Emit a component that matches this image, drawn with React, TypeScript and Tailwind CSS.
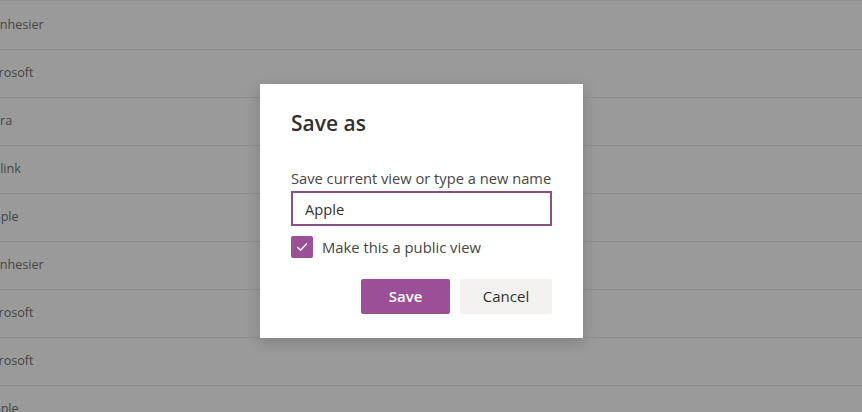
import { useState } from "react";

const rows = [
  { name: "Sennhesier", shift: "-ml-[22px]" },
  { name: "Microsoft", shift: "-ml-[22px]" },
  { name: "Zebra", shift: "-ml-[22px]" },
  { name: "Dlink", shift: "-ml-[9px]" },
  { name: "Apple", shift: "-ml-[15px]" },
  { name: "Sennhesier", shift: "-ml-[22px]" },
  { name: "Microsoft", shift: "-ml-[22px]" },
  { name: "Microsoft", shift: "-ml-[22px]" },
  { name: "Apple", shift: "-ml-[15px]" },
];

function CheckIcon() {
  return (
    <svg width="14" height="14" viewBox="0 0 14 14" fill="none">
      <path d="M2.5 7.2 L5.6 10.2 L11.6 3.8" stroke="white" strokeWidth="1.3" strokeLinecap="round" strokeLinejoin="round" />
    </svg>
  );
}

export default function App() {
  const [name, setName] = useState("Apple");
  const [isPublic, setIsPublic] = useState(true);

  return (
    <div
      className="relative h-[412px] w-[862px] overflow-hidden bg-[#9a9a9a]"
      style={{ fontFamily: '"Open Sans", "Noto Sans", sans-serif' }}
    >
      <ul className="flex flex-col border-t border-[#8e8e8e] pt-[1px]">
        {rows.map((r, i) => (
          <li key={i} className="flex h-[48px] shrink-0 items-center border-b border-[#8e8e8e]">
            <span className={`${r.shift} text-[12.6px] text-[#454545]`}>{r.name}</span>
          </li>
        ))}
      </ul>

      <div className="absolute left-[260px] top-[84px] flex h-[254px] w-[323px] flex-col bg-white px-[31px] pt-[24px] shadow-[0_4px_14px_rgba(0,0,0,0.18)]">
        <h2 className="text-[21px] font-semibold leading-[30px] text-[#323130]">Save as</h2>
        <label className="mt-[30px] text-[14.7px] leading-[20px] text-[#484644]">
          Save current view or type a new name
        </label>
        <input
          value={name}
          onChange={(e) => setName(e.target.value)}
          className="mt-[3px] h-[35px] w-[261px] border-2 border-[#8a4f84] px-[12px] text-[14.7px] text-[#323130] outline-none"
        />
        <label className="mt-[10px] flex items-center gap-[9px] text-[14.8px] text-[#484644]">
          <button
            type="button"
            onClick={() => setIsPublic((p) => !p)}
            className={`flex h-[22px] w-[22px] items-center justify-center rounded-[2px] ${
              isPublic ? "bg-[#9b4f96]" : "border border-[#605e5c] bg-white"
            }`}
          >
            {isPublic && <CheckIcon />}
          </button>
          Make this a public view
        </label>
        <div className="mt-[21px] flex justify-end gap-[10px]">
          <button
            type="button"
            className="h-[35px] w-[89px] rounded-[2px] bg-[#9b4f96] text-[15px] font-semibold text-white"
          >
            Save
          </button>
          <button
            type="button"
            className="h-[35px] w-[92px] rounded-[2px] bg-[#f3f2f1] text-[15px] text-[#323130]"
          >
            Cancel
          </button>
        </div>
      </div>
    </div>
  );
}
